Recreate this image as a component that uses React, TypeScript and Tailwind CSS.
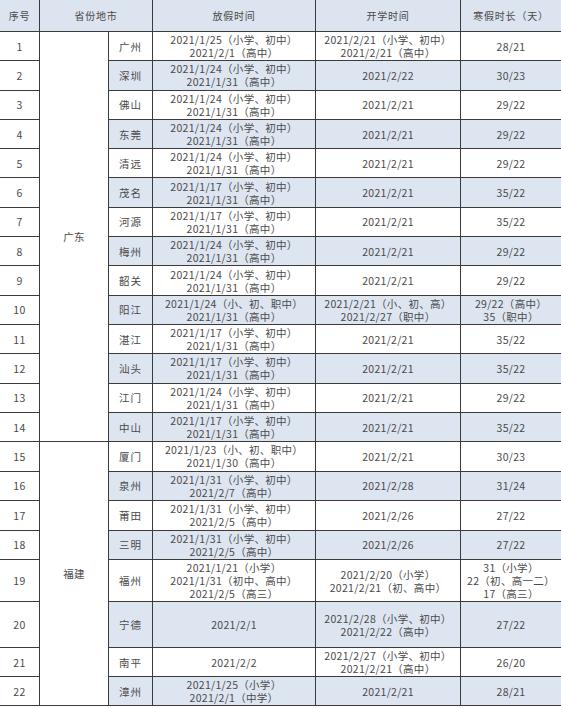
import React from "react";

type Row = { n: number; city: string; off: string[]; start: string[]; len: string[] };

const a24 = ["2021/1/24（小学、初中）", "2021/1/31（高中）"];
const a17 = ["2021/1/17（小学、初中）", "2021/1/31（高中）"];

const gd: Row[] = [
  { n: 1, city: "广州", off: ["2021/1/25（小学、初中）", "2021/2/1（高中）"], start: ["2021/2/21（小学、初中）", "2021/2/21（高中）"], len: ["28/21"] },
  { n: 2, city: "深圳", off: a24, start: ["2021/2/22"], len: ["30/23"] },
  { n: 3, city: "佛山", off: a24, start: ["2021/2/21"], len: ["29/22"] },
  { n: 4, city: "东莞", off: a24, start: ["2021/2/21"], len: ["29/22"] },
  { n: 5, city: "清远", off: a24, start: ["2021/2/21"], len: ["29/22"] },
  { n: 6, city: "茂名", off: a17, start: ["2021/2/21"], len: ["35/22"] },
  { n: 7, city: "河源", off: a17, start: ["2021/2/21"], len: ["35/22"] },
  { n: 8, city: "梅州", off: a24, start: ["2021/2/21"], len: ["29/22"] },
  { n: 9, city: "韶关", off: a24, start: ["2021/2/21"], len: ["29/22"] },
  { n: 10, city: "阳江", off: ["2021/1/24（小、初、职中）", "2021/1/31（高中）"], start: ["2021/2/21（小、初、高）", "2021/2/27（职中）"], len: ["29/22（高中）", "35（职中）"] },
  { n: 11, city: "湛江", off: a17, start: ["2021/2/21"], len: ["35/22"] },
  { n: 12, city: "汕头", off: a17, start: ["2021/2/21"], len: ["35/22"] },
  { n: 13, city: "江门", off: a24, start: ["2021/2/21"], len: ["29/22"] },
  { n: 14, city: "中山", off: a17, start: ["2021/2/21"], len: ["35/22"] },
];

const fj: Row[] = [
  { n: 15, city: "厦门", off: ["2021/1/23（小、初、职中）", "2021/1/30（高中）"], start: ["2021/2/21"], len: ["30/23"] },
  { n: 16, city: "泉州", off: ["2021/1/31（小学、初中）", "2021/2/7（高中）"], start: ["2021/2/28"], len: ["31/24"] },
  { n: 17, city: "莆田", off: ["2021/1/31（小学、初中）", "2021/2/5（高中）"], start: ["2021/2/26"], len: ["27/22"] },
  { n: 18, city: "三明", off: ["2021/1/31（小学、初中）", "2021/2/5（高中）"], start: ["2021/2/26"], len: ["27/22"] },
  { n: 19, city: "福州", off: ["2021/1/21（小学）", "2021/1/31（初中、高中）", "2021/2/5（高三）"], start: ["2021/2/20（小学）", "2021/2/21（初、高中）"], len: ["31（小学）", "22（初、高一二）", "17（高三）"] },
  { n: 20, city: "宁德", off: ["2021/2/1"], start: ["2021/2/28（小学、初中）", "2021/2/22（高中）"], len: ["27/22"] },
  { n: 21, city: "南平", off: ["2021/2/2"], start: ["2021/2/27（小学、初中）", "2021/2/21（高中）"], len: ["26/20"] },
  { n: 22, city: "漳州", off: ["2021/1/25（小学）", "2021/2/1（中学）"], start: ["2021/2/21"], len: ["28/21"] },
];

const cell =
  "flex flex-col items-center justify-center text-center border-b-[1.5px] border-[#3b3b3b] leading-[13px] whitespace-nowrap";

function Lines({ items }: { items: string[] }) {
  return (
    <>
      {items.map((t, i) => (
        <span key={i}>{t}</span>
      ))}
    </>
  );
}

function DataRow({ r, province }: { r: Row; province?: React.ReactNode }) {
  const blue = r.n % 2 === 0;
  const bg = blue ? "bg-[#dde5f0]" : "bg-white";
  return (
    <>
      <div className={`${cell} border-r-[1.5px] bg-white`}>{r.n}</div>
      {province}
      <div className={`${cell} border-r-[1.5px] ${bg} tracking-[1px]`}>{r.city}</div>
      <div className={`${cell} border-r-[1.5px] ${bg}`}>
        <Lines items={r.off} />
      </div>
      <div className={`${cell} border-r-[1.5px] ${bg}`}>
        <Lines items={r.start} />
      </div>
      <div className={`${cell} ${bg}`}>
        <Lines items={r.len} />
      </div>
    </>
  );
}

export default function App() {
  const head = `${cell} bg-[#dce4ef] text-[10px] tracking-[0.8px]`;
  return (
    <div className="w-[561px] h-[708px] bg-white overflow-hidden font-['Noto_Sans_CJK_SC','Noto_Sans',sans-serif] text-[10.5px] tracking-[0.3px] text-[#4a4a4a]">
      <div className="grid grid-cols-[40px_69px_44px_163px_145px_100px] grid-rows-[32px_repeat(14,29.3px)_repeat(4,29.5px)_42px_46px_29px_29px]">
        <div className={`${head} border-r-[1.5px]`}>序号</div>
        <div className={`${head} border-r-[1.5px] col-span-2`}>省份地市</div>
        <div className={`${head} border-r-[1.5px]`}>放假时间</div>
        <div className={`${head} border-r-[1.5px]`}>开学时间</div>
        <div className={head}>寒假时长（天）</div>

        {gd.map((r, i) => (
          <DataRow
            key={r.n}
            r={r}
            province={
              i === 0 ? (
                <div className={`${cell} border-r-[1.5px] bg-white row-span-14`}>广东</div>
              ) : undefined
            }
          />
        ))}
        {fj.map((r, i) => (
          <DataRow
            key={r.n}
            r={r}
            province={
              i === 0 ? (
                <div className={`${cell} border-r-[1.5px] bg-white row-span-8`}>福建</div>
              ) : undefined
            }
          />
        ))}
      </div>
    </div>
  );
}
